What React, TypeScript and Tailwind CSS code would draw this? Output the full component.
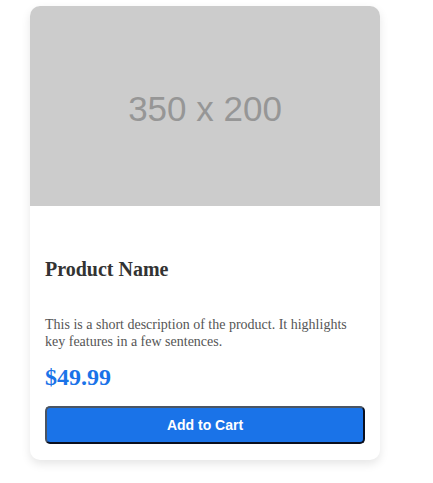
import React from "react";

export default function App() {
  return (
    <div className="min-h-[483px] w-[433px] bg-white pl-[30px] pt-[6px]">
      <div className="w-[350px] overflow-hidden rounded-[10px] bg-white shadow-[0_4px_10px_rgba(0,0,0,0.1)]">
        <div className="flex h-[200px] w-full items-center justify-center bg-[#cccccc]">
          <span className="pt-[6px] text-[35px] text-[#969696] [font-family:'Liberation_Sans',Arial,sans-serif]">
            350 x 200
          </span>
        </div>
        <div className="px-[15px] pb-[16px] pt-[15px] [font-family:'Liberation_Serif','Times_New_Roman',serif]">
          <h2 className="mt-[37px] text-[20px] font-bold leading-[23px] text-[#333333]">
            Product Name
          </h2>
          <p className="mt-[35px] text-[14px] leading-[17px] text-[#555555]">
            This is a short description of the product. It highlights key features in a few sentences.
          </p>
          <div className="mt-[13px] text-[24px] font-bold leading-[28px] text-[#1a73e8]">
            $49.99
          </div>
          <button className="mt-[15px] flex h-[38px] w-[320px] items-center justify-center rounded-[5px] border-2 border-l-[#4b5563] border-t-[#4b5563] border-b-[#0a0f1e] border-r-[#0a0f1e] bg-[#1a73e8] text-[14px] font-bold text-white [font-family:'Liberation_Sans',Arial,sans-serif]">
            Add to Cart
          </button>
        </div>
      </div>
    </div>
  );
}
